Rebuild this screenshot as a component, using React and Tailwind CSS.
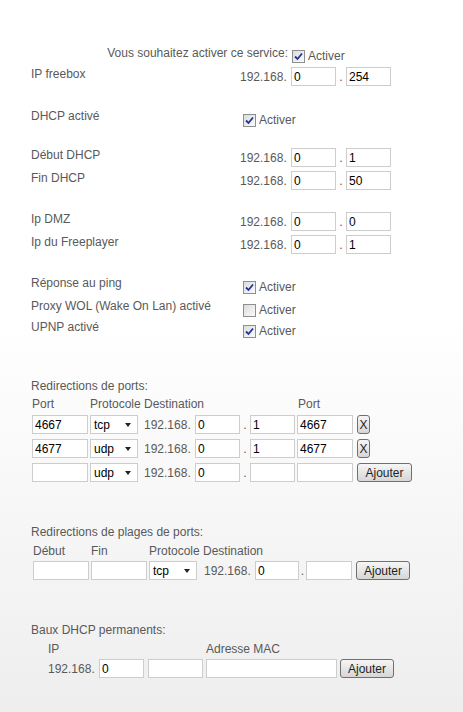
const Field = ({ value = "", w = "w-[45px]" }) => (
  <input
    type="text"
    readOnly
    defaultValue={value}
    className={`${w} h-[19px] shrink-0 border border-[#cdcdcd] bg-white px-[2px] text-[12px] leading-[14px] text-black outline-none`}
  />
);

const Dropdown = ({ value }) => (
  <div className="relative flex h-[19px] w-[48px] shrink-0 items-center border border-[#cdcdcd] bg-white pl-[3px] text-black">
    <span>{value}</span>
    {/* little arrow of the select */}
    <svg className="absolute right-[6px] top-[7px]" width="6" height="4" viewBox="0 0 6 4">
      <path d="M0 0 H6 L3 4 Z" fill="#222" />
    </svg>
  </div>
);

const Check = ({ checked = true }) => (
  <span className="flex h-[13px] w-[13px] shrink-0 items-center justify-center border border-[#8e8f8f] bg-linear-to-br from-[#dcdcdc] to-[#fbfbfb]">
    {checked && (
      <svg width="9" height="9" viewBox="0 0 9 9">
        <path d="M1 4.5 L3.5 7 L8 1.5" stroke="#21349a" strokeWidth="1.8" fill="none" />
      </svg>
    )}
  </span>
);

const Btn = ({ children, w }) => (
  <button
    className={`${w} flex h-[19px] shrink-0 items-center justify-center rounded-[3px] border border-[#707070] bg-linear-to-b from-[#f6f6f6] to-[#d6d6d6] text-[12px] text-[#1e1e1e]`}
  >
    {children}
  </button>
);

const Ip = ({ a, b }) => (
  <div className="flex items-center">
    <span className="w-[51px] shrink-0">192.168.</span>
    <Field value={a} />
    <span className="w-[10px] shrink-0 text-center">.</span>
    <Field value={b} />
  </div>
);

const IpRow = ({ label, a, b, mt }) => (
  <div className={`flex items-start ${mt}`}>
    <span className="w-[209px] shrink-0">{label}</span>
    <Ip a={a} b={b} />
  </div>
);

const CheckRow = ({ label, checked, mt }) => (
  <div className={`flex items-start ${mt}`}>
    <span className="w-[212px] shrink-0">{label}</span>
    <div className="mt-[4px] flex items-center gap-[3px]">
      <Check checked={checked} />
      <span>Activer</span>
    </div>
  </div>
);

const PortRow = ({ from, proto, c, d, to, last, mt }) => (
  <div className={`flex items-center ${mt}`}>
    <span className="ml-[1px]" />
    <Field value={from} w="w-[56px]" />
    <span className="w-[2px] shrink-0" />
    <Dropdown value={proto} />
    <span className="w-[6px] shrink-0" />
    <span className="w-[51px] shrink-0">192.168.</span>
    <Field value={c} />
    <span className="w-[10px] shrink-0 text-center">.</span>
    <Field value={d} />
    <span className="w-[2px] shrink-0" />
    <Field value={to} w="w-[56px]" />
    <span className="w-[4px] shrink-0" />
    {last ? <Btn w="w-[55px]">Ajouter</Btn> : <Btn w="w-[13px]">X</Btn>}
  </div>
);

export default function App() {
  return (
    <div className="min-h-[712px] w-[463px] bg-linear-to-b from-white from-45% to-[#eeeeee] pl-[31px] pt-[46px] font-['Liberation_Sans',Arial,sans-serif] text-[12px] leading-[14px] text-[#595959]">
      {/* service switch */}
      <div className="flex items-start">
        <span className="w-[257px] shrink-0 text-right">Vous souhaitez activer ce service:</span>
        <div className="ml-[4px] mt-[3px] flex items-center gap-[3px]">
          <Check />
          <span>Activer</span>
        </div>
      </div>

      <IpRow label="IP freebox" a="0" b="254" mt="mt-[4px]" />

      <CheckRow label="DHCP activé" checked mt="mt-[23px]" />

      <IpRow label="Début DHCP" a="0" b="1" mt="mt-[21px]" />
      <IpRow label="Fin DHCP" a="0" b="50" mt="mt-[4px]" />

      <IpRow label="Ip DMZ" a="0" b="0" mt="mt-[22px]" />
      <IpRow label="Ip du Freeplayer" a="0" b="1" mt="mt-[4px]" />

      <CheckRow label="Réponse au ping" checked mt="mt-[22px]" />
      <CheckRow label="Proxy WOL (Wake On Lan) activé" checked={false} mt="mt-[5px]" />
      <CheckRow label="UPNP activé" checked mt="mt-[3px]" />

      {/* Redirections de ports */}
      <div className="mt-[41px]">Redirections de ports:</div>
      <div className="mt-[4px] flex">
        <span className="ml-[1px] w-[58px] shrink-0">Port</span>
        <span className="w-[54px] shrink-0">Protocole</span>
        <span className="w-[154px] shrink-0">Destination</span>
        <span>Port</span>
      </div>
      <PortRow from="4667" proto="tcp" c="0" d="1" to="4667" mt="mt-[4px]" />
      <PortRow from="4677" proto="udp" c="0" d="1" to="4677" mt="mt-[5px]" />
      <PortRow proto="udp" c="0" last mt="mt-[5px]" />

      {/* Redirections de plages de ports */}
      <div className="mt-[43px]">Redirections de plages de ports:</div>
      <div className="mt-[5px] flex pl-[2px]">
        <span className="w-[58px] shrink-0">Début</span>
        <span className="w-[58px] shrink-0">Fin</span>
        <span className="w-[54px] shrink-0">Protocole</span>
        <span>Destination</span>
      </div>
      <div className="mt-[3px] flex items-center pl-[2px]">
        <Field w="w-[56px]" />
        <span className="w-[2px] shrink-0" />
        <Field w="w-[56px]" />
        <span className="w-[2px] shrink-0" />
        <Dropdown value="tcp" />
        <span className="w-[7px] shrink-0" />
        <span className="w-[51px] shrink-0">192.168.</span>
        <Field value="0" w="w-[44px]" />
        <span className="w-[7px] shrink-0 text-center">.</span>
        <Field w="w-[46px]" />
        <span className="w-[4px] shrink-0" />
        <Btn w="w-[54px]">Ajouter</Btn>
      </div>

      {/* Baux DHCP permanents */}
      <div className="mt-[43px]">Baux DHCP permanents:</div>
      <div className="mt-[5px] flex pl-[17px]">
        <span className="w-[158px] shrink-0">IP</span>
        <span>Adresse MAC</span>
      </div>
      <div className="mt-[3px] flex items-center pl-[17px]">
        <span className="w-[51px] shrink-0">192.168.</span>
        <Field value="0" />
        <span className="w-[4px] shrink-0" />
        <Field w="w-[55px]" />
        <span className="w-[3px] shrink-0" />
        <Field w="w-[131px]" />
        <span className="w-[3px] shrink-0" />
        <Btn w="w-[54px]">Ajouter</Btn>
      </div>
    </div>
  );
}
